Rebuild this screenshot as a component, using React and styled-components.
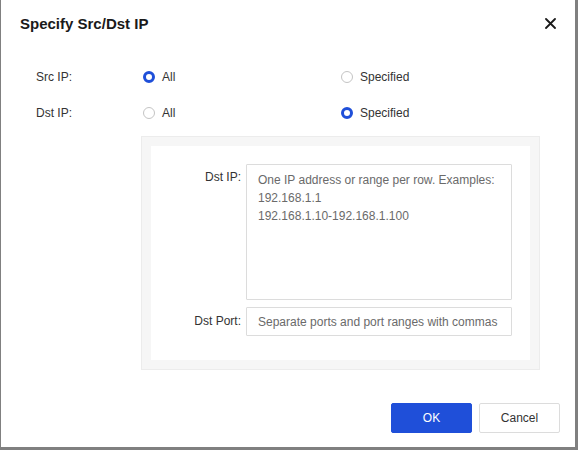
import { useState } from 'react'
import styled, { createGlobalStyle } from 'styled-components'

const GlobalStyle = createGlobalStyle`
  html, body {
    margin: 0;
    padding: 0;
    background: #808080;
  }
  body {
    font-family: "Liberation Sans", Arial, sans-serif;
  }
`

const Overlay = styled.div`
  width: 578px;
  height: 450px;
  padding: 0 3px 3px 1px;
  box-sizing: border-box;
`

const Dialog = styled.div`
  background: #fff;
  height: 100%;
  display: flex;
  flex-direction: column;
`

const Header = styled.div`
  display: flex;
  align-items: center;
  justify-content: space-between;
  padding: 10px 15px 0 19px;
  height: 26px;
`

const Title = styled.h2`
  margin: 0;
  font-size: 15px;
  font-weight: 700;
  color: #1a1a1a;
`

const Close = styled.button`
  border: 0;
  background: none;
  padding: 0;
  width: 20px;
  height: 20px;
  display: flex;
  align-items: center;
  justify-content: center;
  cursor: pointer;
`

const Body = styled.div`
  flex: 1;
  padding: 32px 0 0 35px;
`

const Row = styled.div`
  display: grid;
  grid-template-columns: 107px 198px 1fr;
  align-items: center;
  height: 18px;
  & + & {
    margin-top: 18px;
  }
`

const Label = styled.span`
  font-size: 12px;
  color: #333;
`

const RadioLabel = styled.label`
  display: flex;
  align-items: center;
  gap: 7px;
  font-size: 12px;
  color: #333;
  cursor: pointer;
`

const Dot = styled.span`
  width: 12px;
  height: 12px;
  border-radius: 50%;
  box-sizing: border-box;
  border: ${p => (p.$on ? '3.5px solid #1f4fd9' : '1px solid #c4c4c4')};
  background: #fff;
`

const Panel = styled.div`
  margin: 14px 0 0 105px;
  width: 399px;
  height: 234px;
  box-sizing: border-box;
  background: #f6f6f6;
  border: 1px solid #ececec;
  padding: 9px;
`

const Inner = styled.div`
  background: #fff;
  height: 100%;
  padding: 18px 0 0 0;
  box-sizing: border-box;
  display: flex;
  flex-direction: column;
  gap: 7px;
`

const Field = styled.div`
  display: grid;
  grid-template-columns: 90px 266px;
  column-gap: 5px;
  align-items: start;
`

const FieldLabel = styled.span`
  font-size: 12px;
  color: #333;
  text-align: right;
  padding-top: ${p => p.$top}px;
`

const Area = styled.textarea`
  width: 266px;
  height: 136px;
  box-sizing: border-box;
  border: 1px solid #dcdcdc;
  border-radius: 1px;
  padding: 6px 11px;
  font-family: inherit;
  font-size: 12px;
  line-height: 18px;
  resize: none;
  outline: none;
  &::placeholder {
    color: #6a6a6a;
  }
`

const Input = styled.input`
  width: 266px;
  height: 29px;
  box-sizing: border-box;
  border: 1px solid #dcdcdc;
  border-radius: 1px;
  padding: 0 11px;
  font-family: inherit;
  font-size: 12px;
  outline: none;
  &::placeholder {
    color: #6a6a6a;
  }
`

const Footer = styled.div`
  display: flex;
  justify-content: flex-end;
  gap: 7px;
  padding: 0 15px 14px 0;
`

const Button = styled.button`
  width: 81px;
  height: 30px;
  font-family: inherit;
  font-size: 12px;
  border-radius: 2px;
  cursor: pointer;
  border: 1px solid ${p => (p.$primary ? '#1f4fd9' : '#dcdcdc')};
  background: ${p => (p.$primary ? '#1f4fd9' : '#fff')};
  color: ${p => (p.$primary ? '#fff' : '#333')};
`

function RadioRow({ label, value, onChange }) {
  return (
    <Row>
      <Label>{label}</Label>
      <RadioLabel onClick={() => onChange('all')}>
        <Dot $on={value === 'all'} />
        All
      </RadioLabel>
      <RadioLabel onClick={() => onChange('specified')}>
        <Dot $on={value === 'specified'} />
        Specified
      </RadioLabel>
    </Row>
  )
}

export default function App() {
  const [src, setSrc] = useState('all')
  const [dst, setDst] = useState('specified')

  return (
    <>
      <GlobalStyle />
      <Overlay>
        <Dialog>
          <Header>
            <Title>Specify Src/Dst IP</Title>
            <Close aria-label="Close">
              <svg width="11" height="11" viewBox="0 0 11 11">
                <path d="M1 1L10 10M10 1L1 10" stroke="#1a1a1a" strokeWidth="1.8" strokeLinecap="round" />
              </svg>
            </Close>
          </Header>
          <Body>
            <RadioRow label="Src IP:" value={src} onChange={setSrc} />
            <RadioRow label="Dst IP:" value={dst} onChange={setDst} />
            {dst === 'specified' && (
              <Panel>
                <Inner>
                  <Field>
                    <FieldLabel $top={6}>Dst IP:</FieldLabel>
                    <Area placeholder={'One IP address or range per row. Examples:\n192.168.1.1\n192.168.1.10-192.168.1.100'} />
                  </Field>
                  <Field>
                    <FieldLabel $top={7}>Dst Port:</FieldLabel>
                    <Input placeholder="Separate ports and port ranges with commas" />
                  </Field>
                </Inner>
              </Panel>
            )}
          </Body>
          <Footer>
            <Button $primary>OK</Button>
            <Button>Cancel</Button>
          </Footer>
        </Dialog>
      </Overlay>
    </>
  )
}
